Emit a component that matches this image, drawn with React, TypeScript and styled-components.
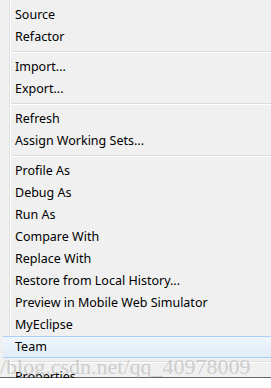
import styled, { createGlobalStyle } from 'styled-components';

const GlobalStyle = createGlobalStyle`
   html, body {
      margin: 0;
      padding: 0;
      background: #ffffff;
   }
`;

type Entry = { label: string; active?: boolean } | 'sep';

const entries: Entry[] = [
   { label: 'Source' },
   { label: 'Refactor' },
   'sep',
   { label: 'Import...' },
   { label: 'Export...' },
   'sep',
   { label: 'Refresh' },
   { label: 'Assign Working Sets...' },
   'sep',
   { label: 'Profile As' },
   { label: 'Debug As' },
   { label: 'Run As' },
   { label: 'Compare With' },
   { label: 'Replace With' },
   { label: 'Restore from Local History...' },
   { label: 'Preview in Mobile Web Simulator' },
   { label: 'MyEclipse' },
   { label: 'Team', active: true },
   'sep',
   { label: 'Properties' },
];

const App = () => {
   return (
      <>
         <GlobalStyle />
         <Menu>
            {entries.map((e, i) =>
               e === 'sep' ? (
                  <Separator key={i} />
               ) : (
                  <Item key={i} $active={e.active}>
                     {e.label}
                  </Item>
               )
            )}
            <Watermark>/blog.csdn.net/qq_40978009</Watermark>
         </Menu>
      </>
   );
};

export default App;

const Menu = styled.div`
   position: relative;
   width: 271px;
   height: 378px;
   box-sizing: border-box;
   padding-top: 4px;
   background-color: #f0f0f0;
   background-image: linear-gradient(
      to right,
      transparent 9px,
      #e2e3e3 9px,
      #e2e3e3 10px,
      #ffffff 10px,
      #ffffff 11px,
      transparent 11px
   );
   border-bottom: 1px solid #646464;
   font-family: 'Noto Sans', 'Open Sans', sans-serif;
   font-size: 12.5px;
   color: #000000;
`;

const Item = styled.div<{ $active?: boolean }>`
   height: 22px;
   line-height: 20px;
   box-sizing: border-box;
   padding-left: 12px;
   margin-left: 3px;
   white-space: nowrap;
   border-top: 1px solid ${(p) => (p.$active ? '#a8cff5' : 'transparent')};
   border-bottom: 1px solid ${(p) => (p.$active ? '#a8cff5' : 'transparent')};
   background: ${(p) =>
      p.$active ? 'linear-gradient(to bottom, #eef5fc, #e2edf9)' : 'transparent'};
`;

const Separator = styled.div`
   height: 8px;
   display: flex;
   flex-direction: column;
   justify-content: center;
   margin-left: 11px;

   &::before {
      content: '';
      display: block;
      height: 1px;
      background: #dcdcdc;
   }

   &::after {
      content: '';
      display: block;
      height: 1px;
      background: #ffffff;
   }
`;

const Watermark = styled.div`
   position: absolute;
   left: 0;
   top: 358px;
   font-family: 'Liberation Serif', serif;
   font-size: 22px;
   line-height: 18px;
   letter-spacing: 0;
   color: rgba(170, 170, 170, 0.5);
   white-space: nowrap;
   pointer-events: none;
`;
